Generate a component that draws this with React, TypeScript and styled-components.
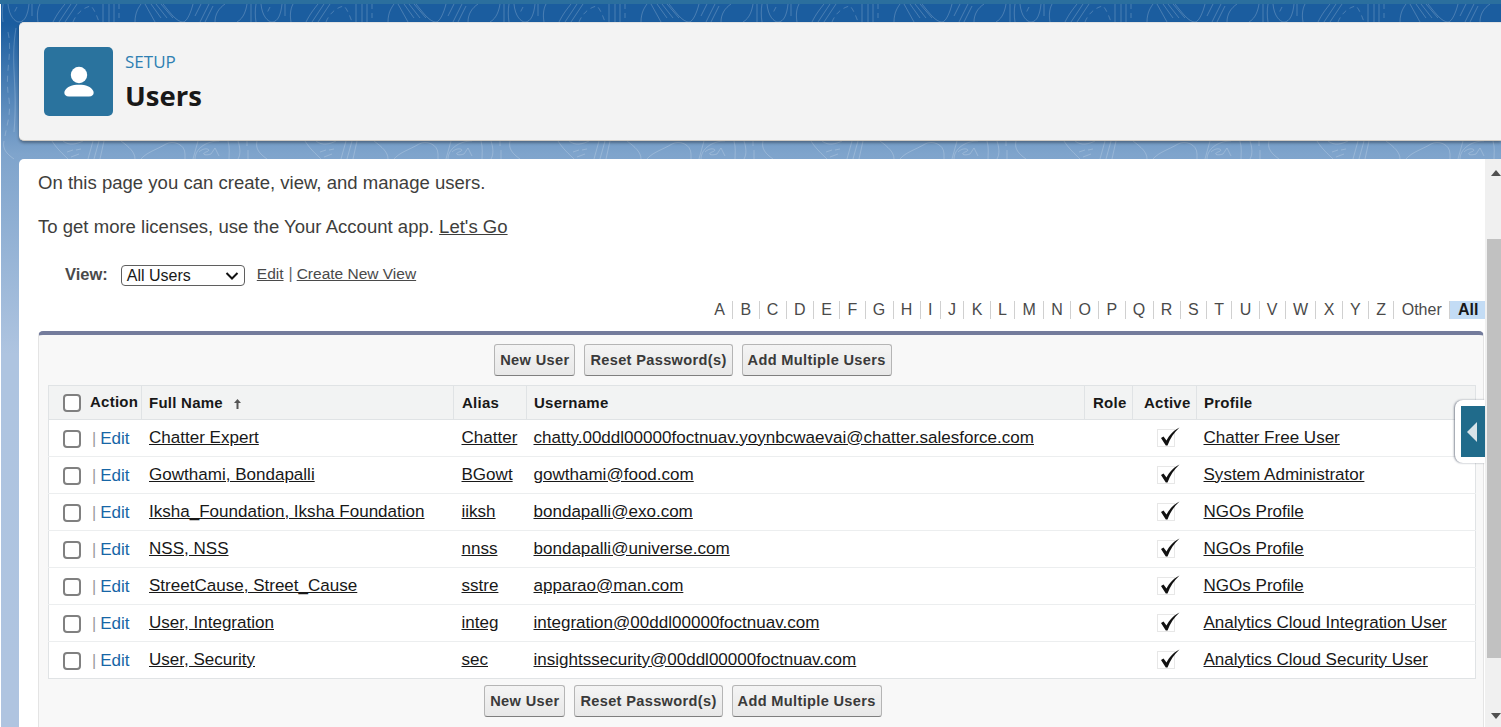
import React from "react";
import styled, { createGlobalStyle } from "styled-components";

const Global = createGlobalStyle`
  html, body { margin: 0; padding: 0; height: 727px; overflow: hidden; background: #fff; }
  * { box-sizing: border-box; }
  body { font-family: "Liberation Sans", Arial, sans-serif; color: #181818; }
`;

const Page = styled.div`
  position: relative;
  width: 1501px;
  height: 727px;
  overflow: hidden;
  display: flex;
  flex-direction: column;
  padding-top: 4px;
  padding-left: 1px;
  background: #fff;
`;
const TopStrip = styled.div`
  position: absolute;
  left: 0; right: 0; top: 0;
  height: 4px;
  background: #2b6f9e;
`;
const Backdrop = styled.div`
  flex: 1;
  display: flex;
  flex-direction: column;
  padding: 18px 0 0 18px;
  background: linear-gradient(180deg, #1b5d9f 0, #1b5d9f 20px, #7fa4cc 150px, #aec4e0 350px, #afc4e0 100%);
  position: relative;
  overflow: hidden;
`;
const Contours = styled.svg`
  position: absolute;
  left: 0;
  top: 0;
  width: 1500px;
  height: 160px;
`;
const HeaderCard = styled.header`
  position: relative;
  height: 119px;
  display: flex;
  align-items: center;
  gap: 13px;
  padding-left: 25px;
  background: #f3f3f3;
  border-top: 1px solid #e2e2e2;
  border-bottom: 1px solid #cfcac3;
  border-radius: 5px 0 0 5px;
  box-shadow: 0 2px 3px rgba(0,0,0,.33);
`;
const IconTile = styled.div`
  width: 69px;
  height: 69px;
  border-radius: 5px;
  background: #2a739e;
  display: flex;
  align-items: center;
  justify-content: center;
`;
const Titles = styled.div`
  display: flex;
  flex-direction: column;
  padding-top: 2px;
`;
const Eyebrow = styled.div`
  font-family: "Open Sans", sans-serif;
  font-size: 17px;
  line-height: 22px;
  color: #2e7fb2;
  margin: -1px 0 0 -1px;
`;
const Title = styled.h1`
  margin: 6px 0 0 -1px;
  font-family: "Open Sans", sans-serif;
  font-size: 27.5px;
  line-height: 34px;
  font-weight: 700;
  color: #181818;
`;
const Body = styled.main`
  position: relative;
  margin-top: 18px;
  flex: 1;
  background: #fff;
  border-radius: 5px 0 0 0;
  display: flex;
  min-height: 0;
`;
const Content = styled.div`
  flex: 1;
  min-width: 0;
  padding: 12px 1px 0 19px;
`;
const Scrollbar = styled.div`
  width: 16px;
  background: #f0f0f0;
  position: relative;
`;
const ScrollArrow = styled.div<{ $down?: boolean }>`
  width: 0;
  height: 0;
  border-left: 5px solid transparent;
  border-right: 5px solid transparent;
  ${p => p.$down ? "border-top: 6px solid #505050;" : "border-bottom: 6px solid #505050;"}
  position: absolute;
  left: 6px;
  ${p => p.$down ? "bottom: 8px;" : "top: 11px;"}
`;
const ScrollThumb = styled.div`
  position: absolute;
  top: 80px;
  left: 2px;
  right: 0;
  height: 419px;
  background: #c1c1c1;
`;
const Para = styled.p<{ $mt?: number }>`
  margin: ${p => p.$mt ?? 0}px 0 0;
  font-size: 18.56px;
  line-height: 24px;
  color: #3e3e3c;
`;
const InlineLink = styled.a`
  color: #3e3e3c;
  text-decoration: underline;
`;
const ViewRow = styled.div`
  display: flex;
  align-items: center;
  margin-top: 23px;
  padding-left: 27px;
  height: 24px;
`;
const ViewLabel = styled.span`
  font-size: 16.5px;
  font-weight: 700;
  color: #4a4a4a;
  margin-right: 13px;
`;
const FakeSelect = styled.div`
  width: 124px;
  height: 21px;
  margin-top: 3px;
  border: 1px solid #5f5f5f;
  border-radius: 4px;
  display: flex;
  align-items: center;
  justify-content: space-between;
  padding: 0 5px;
  font-size: 16px;
  color: #181818;
  margin-right: 12px;
`;
const ViewLink = styled.a`
  font-size: 15.5px;
  color: #4a4a4a;
  text-decoration: underline;
`;
const Sep = styled.span`
  font-size: 16px;
  color: #666;
  margin: 0 4px 0 5px;
`;
const Alpha = styled.div`
  display: flex;
  justify-content: flex-end;
  align-items: center;
  height: 18px;
  margin-top: 15px;
  margin-right: -1px;
`;
const AlphaItem = styled.span<{ $on?: boolean }>`
  font-size: 16px;
  line-height: 18px;
  color: ${p => p.$on ? "#181818" : "#4a4a4a"};
  font-weight: ${p => p.$on ? 700 : 400};
  background: ${p => p.$on ? "#c3dcf5" : "transparent"};
  padding: ${p => p.$on ? "0 0 0 8px" : "0 7.3px"};
  width: ${p => p.$on ? "35px" : "auto"};
  border-right: ${p => p.$on ? "none" : "1px solid #d0d0d0"};
`;
const Panel = styled.section`
  margin-top: 12px;
  height: 400px;
  background: #f8f8f8;
  border: 1px solid #e4e4e4;
  border-top: 4px solid #747c9c;
  border-radius: 5px 5px 0 0;
  padding: 9px 9px 0;
`;
const Buttons = styled.div<{ $right: number; $mt?: number }>`
  display: flex;
  justify-content: center;
  gap: 9px;
  height: 32px;
  margin-top: ${p => p.$mt ?? 0}px;
  margin-right: ${p => p.$right}px;
`;
const Btn = styled.button`
  font-family: "Liberation Sans", Arial, sans-serif;
  font-size: 14.6px;
  font-weight: 700;
  color: #3a3a3a;
  letter-spacing: .33px;
  background: linear-gradient(#f4f4f4, #e8e8e8);
  border: 1px solid #b5b5b5;
  border-bottom-color: #7f7f7f;
  border-radius: 3px;
  padding: 0 5px;
  height: 32px;
  white-space: nowrap;
`;
const Table = styled.table`
  width: 1427px;
  margin-top: 9px;
  border-collapse: collapse;
  table-layout: fixed;
  background: #fff;
  border: 1px solid #e0e3e5;
`;
const Th = styled.th<{ $w: number; $pad?: number }>`
  width: ${p => p.$w}px;
  height: 34px;
  padding: 0 0 0 ${p => p.$pad ?? 7}px;
  background: #f2f3f3;
  border-bottom: 1px solid #e0e3e5;
  border-right: 1px solid #e0e3e5;
  text-align: left;
  font-size: 15px;
  font-weight: 700;
  letter-spacing: .25px;
  color: #181818;
  white-space: nowrap;
  &:last-child { border-right: none; }
`;
const Td = styled.td<{ $pad?: number }>`
  height: 37px;
  padding: 0 0 1px ${p => p.$pad ?? 7}px;
  border-bottom: 1px solid #eceeef;
  font-size: 17.05px;
  color: #181818;
  white-space: nowrap;
  overflow: visible;
`;
const Tr = styled.tr`
  &:last-child td { border-bottom: none; }
`;
const ActionCell = styled.div`
  display: flex;
  align-items: center;
  height: 100%;
  padding-left: 7px;
`;
const ActionHead = styled.div`
  display: flex;
  align-items: center;
  margin-left: 7px;
  gap: 9px;
  position: relative;
  top: -1px;
`;
const Check = styled.span`
  display: inline-block;
  flex: none;
  width: 18px;
  height: 18px;
  border: 2px solid #808080;
  border-radius: 4px;
  background: #fff;
  position: relative;
  top: 1px;
`;
const Pipe = styled.span`
  color: #999;
  margin: 0 4px 0 11px;
  font-size: 16px;
  position: relative;
  top: 1px;
`;
const EditLink = styled.a`
  color: #1766a6;
  font-size: 17.05px;
  position: relative;
  top: 1px;
`;
const Link = styled.a`
  color: #181818;
  text-decoration: underline;
`;
const SortArrow = styled.svg`
  margin-left: 10px;
  vertical-align: -1px;
`;
const CheckWrap = styled.span`
  display: block;
  width: 23px;
  height: 21px;
  margin-left: 16px;
`;
const Tab = styled.div`
  position: absolute;
  left: 1455px;
  top: 400px;
  width: 30px;
  height: 63px;
  background: #fff;
  border-radius: 8px 0 0 8px;
  box-shadow: -1px 0 2px rgba(60,70,90,.6);
  padding: 6px 0 6px 6px;
`;
const TabInner = styled.div`
  width: 100%;
  height: 100%;
  background: #206b8b;
  display: flex;
  align-items: center;
  padding-left: 6px;
`;
const Tip = styled.div`
  width: 0;
  height: 0;
  border-top: 10px solid transparent;
  border-bottom: 10px solid transparent;
  border-right: 10px solid #d7e3e9;
`;

const letters = "A B C D E F G H I J K L M N O P Q R S T U V W X Y Z Other".split(" ");
const users = [
  ["Chatter Expert", "Chatter", "chatty.00ddl00000foctnuav.yoynbcwaevai@chatter.salesforce.com", "Chatter Free User"],
  ["Gowthami, Bondapalli", "BGowt", "gowthami@food.com", "System Administrator"],
  ["Iksha_Foundation, Iksha Foundation", "iiksh", "bondapalli@exo.com", "NGOs Profile"],
  ["NSS, NSS", "nnss", "bondapalli@universe.com", "NGOs Profile"],
  ["StreetCause, Street_Cause", "sstre", "apparao@man.com", "NGOs Profile"],
  ["User, Integration", "integ", "integration@00ddl00000foctnuav.com", "Analytics Cloud Integration User"],
  ["User, Security", "sec", "insightssecurity@00ddl00000foctnuav.com", "Analytics Cloud Security User"],
];

const CheckMark = () => (
  <svg width="23" height="21" viewBox="0 0 23 21">
    <rect x="0.5" y="2.5" width="17" height="17" fill="none" stroke="#cfcfcf" strokeDasharray="1 1" />
    <path d="M4 11 L6.5 9.5 L9.5 13.5 C12 8.5 16.5 3.5 22.5 0.5 C17 5.5 13 11.5 10.5 18.5 L8.8 18.5 Z" fill="#111" />
  </svg>
);

const ButtonBar = ({ right, mt }: { right: number; mt?: number }) => (
  <Buttons $right={right} $mt={mt}>
    <Btn>New User</Btn>
    <Btn>Reset Password(s)</Btn>
    <Btn>Add Multiple Users</Btn>
  </Buttons>
);

export default function App() {
  return (
    <Page>
      <Global />
      <TopStrip />
      <Backdrop>
        <Contours>
          <defs>
            <pattern id="topo" patternUnits="userSpaceOnUse" width="253" height="160">
              <g fill="none" stroke="rgba(255,255,255,.2)" strokeWidth="1">
                <path d="M194 12 L200 0 M199 18 L208 0 M204 18 L212 2 M214 18 C214 10 218 4 224 0 M236 18 C243 14 245 6 246 0 M250 0 V18 M2 0 C1 6 1 12 2 18 M7 0 C8 12 14 18 18 18 C24 18 27 10 28 0 M31 0 V12 M39 0 C36 6 36 12 37 18" />
                <path d="M52 18 C56 10 60 5 64 0 M58 18 L70 0 M64 18 L76 0 M102 0 V18 M108 0 V18 M113 0 V18 M134 18 C134 8 138 3 140 0 M144 0 L154 18 M150 0 L160 14 M155 0 L166 14 M160 0 L172 14 M162 0 C170 10 176 18 182 18 C186 18 190 8 192 0" />
                <path strokeDasharray="5 4" d="M72 18 C76 8 84 3 90 2 C93 5 96 12 98 18 M118 0 V18 M16 3 L13 9" />
                <path d="M194 155 C194 145 205 137 218 137 M198 148 C204 142 212 146 205 148 C200 150 204 152 210 150 L214 144 L218 152 M227 137 C229 144 228 150 228 155 M237 137 C239 143 240 150 237 155 M246 137 V142 M247 146 V155 M3 137 C1 145 6 150 13 155" />
                <path d="M51 137 C56 145 62 150 67 155 M62 137 C68 142 76 140 82 137 M66 148 L72 146 M75 146 L80 145 M70 153 L78 150 M87 155 L92 137 M93 155 L98 137 M99 155 L103 137 M120 137 C128 143 134 148 134 155 M140 155 C146 148 155 146 165 140 C172 136 184 140 184 150 L184 155 M197 137 L192 155" />
                <path strokeDasharray="6 5" d="M7 28 C12 50 3 70 8 95 C10 110 6 120 4 132" />
                <path d="M15 24 C9 60 17 80 13 128" />
              </g>
            </pattern>
          </defs>
          <rect width="1500" height="160" fill="url(#topo)" />
        </Contours>
        <HeaderCard>
          <IconTile>
            <svg width="30" height="31" viewBox="0 0 30 31">
              <circle cx="15" cy="9" r="8.2" fill="#fff" />
              <path d="M5 30.5 C0.5 30.5 -0.5 27 1 24.5 C3 20.8 8 18.8 15 18.8 C22 18.8 27 20.8 29 24.5 C30.5 27 29.5 30.5 25 30.5 Z" fill="#fff" />
            </svg>
          </IconTile>
          <Titles>
            <Eyebrow>SETUP</Eyebrow>
            <Title>Users</Title>
          </Titles>
        </HeaderCard>
        <Body>
          <Content>
            <Para>On this page you can create, view, and manage users.</Para>
            <Para $mt={20}>To get more licenses, use the Your Account app. <InlineLink>Let's Go</InlineLink></Para>
            <ViewRow>
              <ViewLabel>View:</ViewLabel>
              <FakeSelect>
                All Users
                <svg width="14" height="8" viewBox="0 0 14 8"><path d="M1.5 1 L7 6.5 L12.5 1" fill="none" stroke="#111" strokeWidth="2" /></svg>
              </FakeSelect>
              <ViewLink>Edit</ViewLink>
              <Sep>|</Sep>
              <ViewLink>Create New View</ViewLink>
            </ViewRow>
            <Alpha>
              {letters.map(l => <AlphaItem key={l}>{l}</AlphaItem>)}
              <AlphaItem $on>All</AlphaItem>
            </Alpha>
            <Panel>
              <ButtonBar right={136} />
              <Table>
                <thead>
                  <tr>
                    <Th $w={93}>
                      <ActionHead><Check />Action</ActionHead>
                    </Th>
                    <Th $w={312}>Full Name
                      <SortArrow width="9" height="10" viewBox="0 0 9 10"><path d="M4.5 0 L8 4 H5.5 V10 H3.5 V4 H1 Z" fill="#555" /></SortArrow>
                    </Th>
                    <Th $w={73} $pad={8}>Alias</Th>
                    <Th $w={558}>Username</Th>
                    <Th $w={48} $pad={8}>Role</Th>
                    <Th $w={64} $pad={11}>Active</Th>
                    <Th $w={279}>Profile</Th>
                  </tr>
                </thead>
                <tbody>
                  {users.map(u => (
                    <Tr key={u[0]}>
                      <Td>
                        <ActionCell>
                          <Check />
                          <Pipe>|</Pipe>
                          <EditLink>Edit</EditLink>
                        </ActionCell>
                      </Td>
                      <Td $pad={7.5}><Link>{u[0]}</Link></Td>
                      <Td $pad={8}><Link>{u[1]}</Link></Td>
                      <Td><Link>{u[2]}</Link></Td>
                      <Td />
                      <Td $pad={8}><CheckWrap><CheckMark /></CheckWrap></Td>
                      <Td><Link>{u[3]}</Link></Td>
                    </Tr>
                  ))}
                </tbody>
              </Table>
              <ButtonBar right={156} mt={6} />
            </Panel>
          </Content>
          <Scrollbar>
            <ScrollArrow />
            <ScrollThumb />
            <ScrollArrow $down />
          </Scrollbar>
        </Body>
      </Backdrop>
      <Tab><TabInner><Tip /></TabInner></Tab>
    </Page>
  );
}
